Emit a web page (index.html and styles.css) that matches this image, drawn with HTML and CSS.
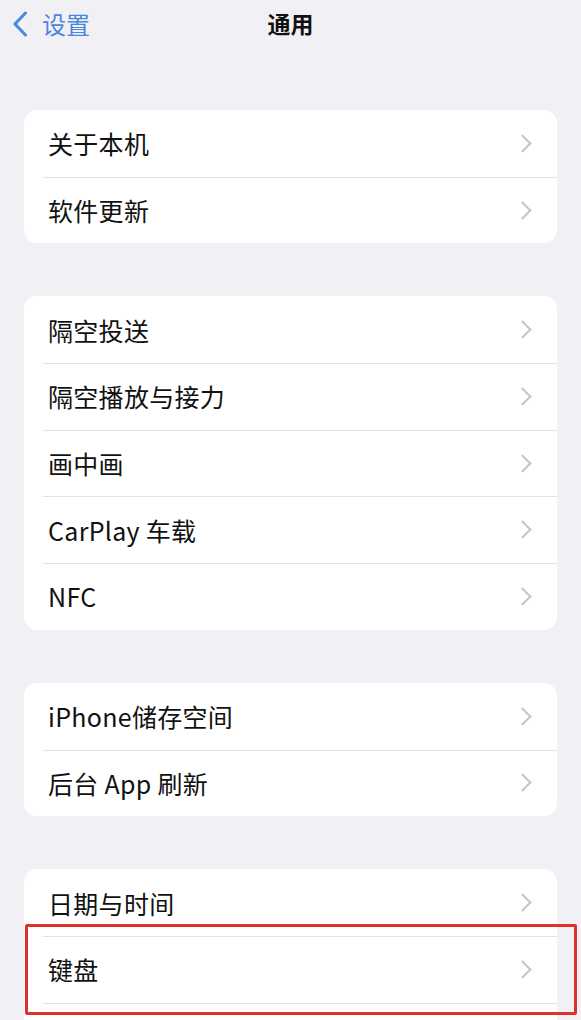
FILE: index.html
```html
<!DOCTYPE html>
<html lang="zh-CN">
<head>
    <meta charset="UTF-8">
    <meta name="viewport" content="width=device-width, initial-scale=1.0">
    <title>通用</title>
    <link rel="stylesheet" href="styles.css">
</head>
<body>
    <header class="nav-bar">
        <a class="nav-back" href="#">
            <svg class="back-icon" viewBox="0 0 16 26" width="16" height="26">
                <path d="M13.5 2 L3 13 L13.5 24" fill="none" stroke="currentColor" stroke-width="3" stroke-linecap="round" stroke-linejoin="round"/>
            </svg>
            <span>设置</span>
        </a>
        <h1 class="nav-title">通用</h1>
    </header>

    <main class="settings">
        <ul class="group">
            <li class="row"><span class="label">关于本机</span><span class="chevron"></span></li>
            <li class="row"><span class="label">软件更新</span><span class="chevron"></span></li>
        </ul>

        <ul class="group">
            <li class="row"><span class="label">隔空投送</span><span class="chevron"></span></li>
            <li class="row"><span class="label">隔空播放与接力</span><span class="chevron"></span></li>
            <li class="row"><span class="label">画中画</span><span class="chevron"></span></li>
            <li class="row"><span class="label">CarPlay 车载</span><span class="chevron"></span></li>
            <li class="row"><span class="label">NFC</span><span class="chevron"></span></li>
        </ul>

        <ul class="group">
            <li class="row"><span class="label">iPhone储存空间</span><span class="chevron"></span></li>
            <li class="row"><span class="label">后台 App 刷新</span><span class="chevron"></span></li>
        </ul>

        <ul class="group group-last">
            <li class="row"><span class="label">日期与时间</span><span class="chevron"></span></li>
            <li class="row row-marked"><span class="label">键盘</span><span class="chevron"></span></li>
            <li class="row"></li>
        </ul>
    </main>
</body>
</html>
```

FILE: styles.css
```css
body {
    font-family: "Noto Sans CJK SC", "Noto Sans", sans-serif;
    margin: 0;
    padding: 0;
    background-color: #f0f0f5;
    color: #111;
    overflow: hidden;
}

.nav-bar {
    position: relative;
    height: 48px;
    display: flex;
    align-items: center;
    justify-content: center;
}

.nav-back {
    position: absolute;
    left: 12px;
    top: 11px;
    display: flex;
    align-items: center;
    gap: 14px;
    color: #4a86dc;
    text-decoration: none;
    font-size: 24px;
    line-height: 26px;
}

.back-icon {
    display: block;
}

.nav-title {
    margin: 0;
    font-size: 23px;
    font-weight: 700;
    line-height: 28px;
    margin-top: -3px;
}

.settings {
    padding: 62px 24px 0;
}

.group {
    list-style: none;
    margin: 0 0 53px;
    padding: 0;
    background-color: #fff;
    border-radius: 13px;
    overflow: hidden;
}

.row {
    position: relative;
    height: 66.7px;
    display: flex;
    align-items: center;
    justify-content: space-between;
    padding: 0 26px 0 24px;
    font-size: 25px;
}

.row + .row::before {
    content: "";
    position: absolute;
    left: 19px;
    right: 0;
    top: 0;
    height: 1px;
    background-color: #e2e2e6;
}

.label {
    letter-spacing: 0.3px;
}

.chevron {
    width: 11px;
    height: 11px;
    border-top: 2.5px solid #c5c5c9;
    border-right: 2.5px solid #c5c5c9;
    transform: rotate(45deg);
    margin-right: 2px;
}

.row-marked::after {
    content: "";
    position: absolute;
    left: 1px;
    right: -20px;
    top: -12px;
    bottom: -12px;
    border: 3px solid #e0302c;
    border-radius: 2px;
    pointer-events: none;
    z-index: 2;
}

.group-last {
    overflow: visible;
}
```
